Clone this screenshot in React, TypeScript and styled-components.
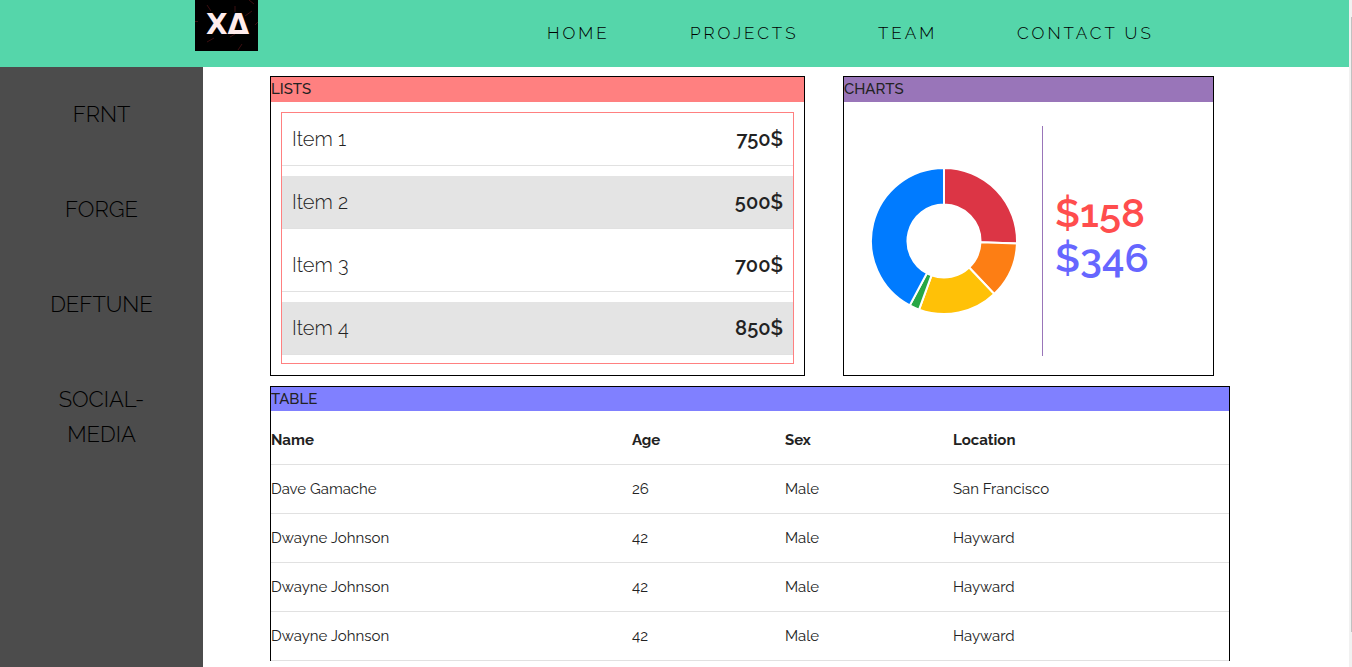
import React from "react";
import styled, { createGlobalStyle } from "styled-components";

const GlobalStyle = createGlobalStyle`
  *, *::before, *::after { box-sizing: border-box; }
  body {
    margin: 0;
    background: #fff;
    color: #222;
    font-family: Raleway, Lato, sans-serif;
    font-size: 15px;
    line-height: 24px;
    font-variant-numeric: oldstyle-nums;
  }
`;

const Page = styled.div`
  display: flex;
  min-height: 100vh;
`;

const Content = styled.div`
  flex: 1;
  min-width: 0;
  display: flex;
  flex-direction: column;
`;

const ScrollTrack = styled.div`
  width: 3px;
  padding: 17px 0 35px 2px;
  background: #f1f1f1;
  display: flex;
`;

const ScrollThumb = styled.div`
  flex: 1;
  background: #c1c1c1;
`;

const Header = styled.header`
  display: flex;
  align-items: flex-start;
  min-height: 67px;
  padding-left: 195px;
  background: #55d6aa;
`;

const LogoLink = styled.a`
  display: block;
  flex: none;
  width: 63px;
  height: 51px;
  svg { display: block; }
`;

const Nav = styled.nav`
  display: grid;
  grid-template-columns: 143px 188px 139px auto;
  margin-left: 289px;
  padding-top: 21px;
`;

const NavLink = styled.a`
  color: #000;
  font-size: 17px;
  font-weight: 300;
  letter-spacing: 3px;
  text-decoration: none;
  white-space: nowrap;
`;

const Body = styled.div`
  flex: 1;
  display: flex;
`;

const Sidebar = styled.nav`
  flex: none;
  width: 15%;
  min-width: 203px;
  display: flex;
  flex-direction: column;
  gap: 60px;
  padding: 30px 40px;
  background: #4c4c4c;
`;

const SideLink = styled.a`
  color: #000;
  font-size: 22px;
  font-weight: 300;
  line-height: 35px;
  text-align: center;
  text-decoration: none;
`;

const Main = styled.main`
  flex: 1;
  min-width: 0;
  display: flex;
  flex-direction: column;
  gap: 10px;
  max-width: 1027px;
  padding: 9px 0 6px 67px;
`;

const TopRow = styled.div`
  display: grid;
  grid-template-columns: 535fr 371fr;
  gap: 38px;
  padding-right: 16px;
`;

const Panel = styled.section<{ $open?: boolean }>`
  display: flex;
  flex-direction: column;
  border: 1px solid #000;
  ${(p) => p.$open && "border-bottom: 0;"}
`;

const PanelTitle = styled.h2<{ $color: string }>`
  margin: 0;
  background: ${(p) => p.$color};
  font-size: 15px;
  font-weight: 500;
  line-height: 24px;
  ${TopRow} & { padding-bottom: 1px; }
`;

const List = styled.ul`
  display: flex;
  flex-direction: column;
  gap: 10px;
  margin: 10px 10px 11px;
  padding: 0 0 8px;
  border: 1px solid #ff8080;
  list-style: none;
`;

const ListRow = styled.li`
  display: flex;
  justify-content: space-between;
  padding: 10px;
  border-bottom: 1px solid #e1e1e1;
  font-size: 20px;
  font-weight: 300;
  line-height: 32px;
  &:nth-child(even) { background: #e4e4e4; }
`;

const Price = styled.span`
  font-weight: 600;
`;

const ChartBody = styled.div`
  flex: 1;
  display: flex;
  align-items: center;
  padding: 5px 0 0 25px;
`;

const Totals = styled.div`
  display: flex;
  flex-direction: column;
  justify-content: center;
  height: 230px;
  margin-left: 23px;
  padding: 0 0 12px 12px;
  border-left: 1px solid #9975b9;
`;

const Total = styled.span<{ $color: string }>`
  color: ${(p) => p.$color};
  font-size: 40px;
  font-weight: 600;
  line-height: 45px;
`;

const Table = styled.table`
  width: 100%;
  margin-top: 5px;
  border-collapse: separate;
  border-spacing: 0;
  table-layout: fixed;
`;

const cell = `
  padding: 12px 15px;
  border-bottom: 1px solid #e1e1e1;
  text-align: left;
  &:first-child { padding-left: 0; }
`;

const Th = styled.th<{ $width?: number }>`
  ${cell}
  font-weight: 700;
  width: ${(p) => (p.$width ? `${p.$width}px` : "auto")};
`;

const Td = styled.td`
  ${cell}
  font-weight: 400;
`;

const navItems = ["HOME", "PROJECTS", "TEAM", "CONTACT US"];
const sideItems = ["FRNT", "FORGE", "DEFTUNE", "SOCIAL-MEDIA"];
const listItems = [
  ["Item 1", "750$"],
  ["Item 2", "500$"],
  ["Item 3", "700$"],
  ["Item 4", "850$"],
];
const people = [
  ["Dave Gamache", "26", "Male", "San Francisco"],
  ["Dwayne Johnson", "42", "Male", "Hayward"],
  ["Dwayne Johnson", "42", "Male", "Hayward"],
  ["Dwayne Johnson", "42", "Male", "Hayward"],
];
const slices = [
  { from: 0, to: 92, color: "#dc3545" },
  { from: 92, to: 136.5, color: "#fd7e14" },
  { from: 136.5, to: 200, color: "#ffc107" },
  { from: 200, to: 208, color: "#28a745" },
  { from: 208, to: 360, color: "#007bff" },
];

const point = (r: number, deg: number) => {
  const a = (deg * Math.PI) / 180;
  return `${75 + r * Math.sin(a)} ${75 - r * Math.cos(a)}`;
};

const slicePath = (from: number, to: number, outer = 73, inner = 36.5) =>
  `M${point(outer, from)}A${outer} ${outer} 0 0 1 ${point(outer, to)}` +
  `L${point(inner, to)}A${inner} ${inner} 0 0 0 ${point(inner, from)}Z`;

function Donut() {
  return (
    <svg width="150" height="150" viewBox="0 0 150 150" role="img" aria-label="Spending chart">
      {slices.map((s) => (
        <path key={s.color} d={slicePath(s.from, s.to)} fill={s.color} stroke="#fff" strokeWidth="2" />
      ))}
    </svg>
  );
}

function Logo() {
  return (
    <svg width="63" height="51" viewBox="0 0 63 51" aria-hidden="true">
      <rect width="63" height="51" fill="#000" />
      <path
        d="M12 5l4 6M54 0l5 4M50 16l7-5M0 21.500h3M60 25l3-3M12 42l7-4M43 50l4-6M40 6v6M35 37l5-3"
        stroke="#3c0e10"
        fill="none"
      />
      <text x="11" y="34" fill="#ffecec" fontFamily="DejaVu Sans, sans-serif" fontWeight="700" fontSize="28">
        XΔ
      </text>
    </svg>
  );
}

export default function App() {
  return (
    <Page>
      <GlobalStyle />
      <Content>
        <Header>
          <LogoLink href="#" aria-label="Home page">
            <Logo />
          </LogoLink>
          <Nav>
            {navItems.map((n) => (
              <NavLink key={n} href="#">{n}</NavLink>
            ))}
          </Nav>
        </Header>
        <Body>
          <Sidebar>
            {sideItems.map((n) => (
              <SideLink key={n} href="#">{n}</SideLink>
            ))}
          </Sidebar>
          <Main>
            <TopRow>
              <Panel>
                <PanelTitle $color="#ff8080">LISTS</PanelTitle>
                <List>
                  {listItems.map(([name, price]) => (
                    <ListRow key={name}>
                      <span>{name}</span>
                      <Price>{price}</Price>
                    </ListRow>
                  ))}
                </List>
              </Panel>
              <Panel>
                <PanelTitle $color="#9975b9">CHARTS</PanelTitle>
                <ChartBody>
                  <Donut />
                  <Totals>
                    <Total $color="#ff4d4d">$158</Total>
                    <Total $color="#6666ff">$346</Total>
                  </Totals>
                </ChartBody>
              </Panel>
            </TopRow>
            <Panel $open>
              <PanelTitle $color="#8080ff">TABLE</PanelTitle>
              <Table>
                <thead>
                  <tr>
                    <Th $width={346}>Name</Th>
                    <Th $width={153}>Age</Th>
                    <Th $width={168}>Sex</Th>
                    <Th>Location</Th>
                  </tr>
                </thead>
                <tbody>
                  {people.map((row, i) => (
                    <tr key={i}>
                      {row.map((value, j) => (
                        <Td key={j}>{value}</Td>
                      ))}
                    </tr>
                  ))}
                </tbody>
              </Table>
            </Panel>
          </Main>
        </Body>
      </Content>
      <ScrollTrack>
        <ScrollThumb />
      </ScrollTrack>
    </Page>
  );
}
